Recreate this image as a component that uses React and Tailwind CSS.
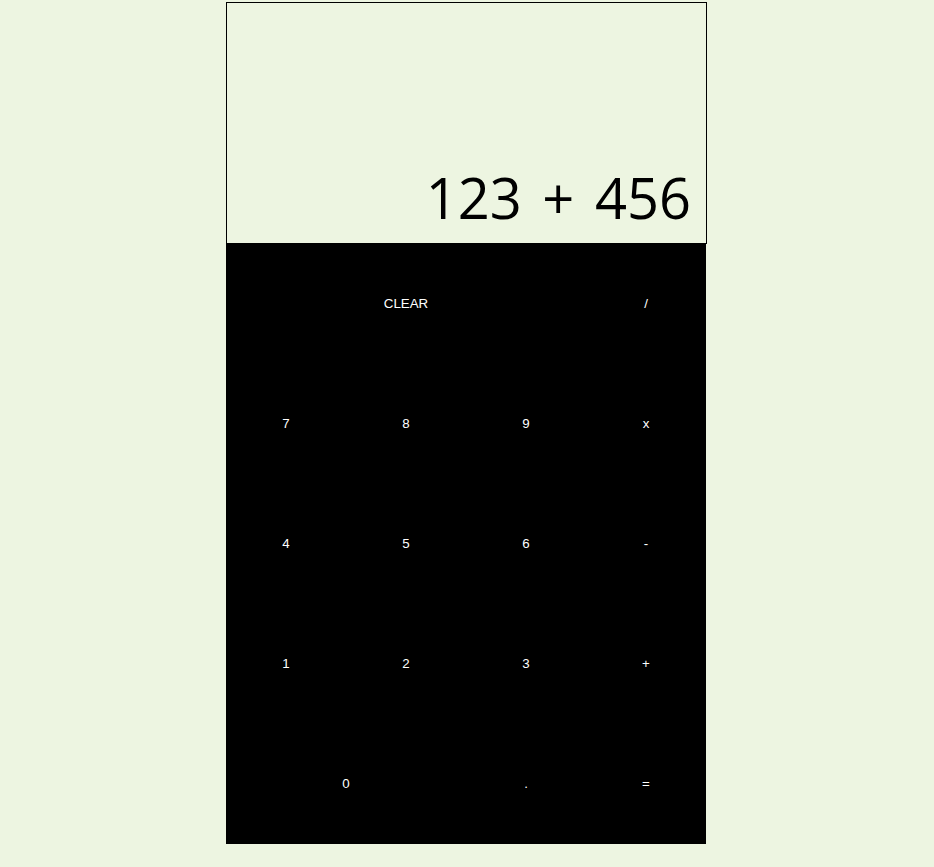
export default function App() {
  const btn = "flex items-center justify-center text-white text-[13.333px] bg-black h-[120px]";
  const f = { fontFamily: '"Liberation Sans", Arial, sans-serif' };
  return (
    <div className="min-h-screen w-full bg-[#edf5e1] flex justify-center pt-[2px]">
      <div className="flex flex-col w-[482px]">
        <div className="h-[242px] w-[481px] border border-black flex items-end justify-end pr-[15px] pb-[18px]">
          <span className="text-[56px] leading-none text-black [word-spacing:6px]" style={{ fontFamily: '"Open Sans", "Noto Sans", sans-serif' }}>123 + 456</span>
        </div>
        <div className="grid grid-cols-4 w-[480px]" style={f}>
          <div className={btn + " col-span-3"}>CLEAR</div>
          <div className={btn}>/</div>
          <div className={btn}>7</div>
          <div className={btn}>8</div>
          <div className={btn}>9</div>
          <div className={btn}>x</div>
          <div className={btn}>4</div>
          <div className={btn}>5</div>
          <div className={btn}>6</div>
          <div className={btn}>-</div>
          <div className={btn}>1</div>
          <div className={btn}>2</div>
          <div className={btn}>3</div>
          <div className={btn}>+</div>
          <div className={btn + " col-span-2"}>0</div>
          <div className={btn}>.</div>
          <div className={btn}>=</div>
        </div>
      </div>
    </div>
  );
}
